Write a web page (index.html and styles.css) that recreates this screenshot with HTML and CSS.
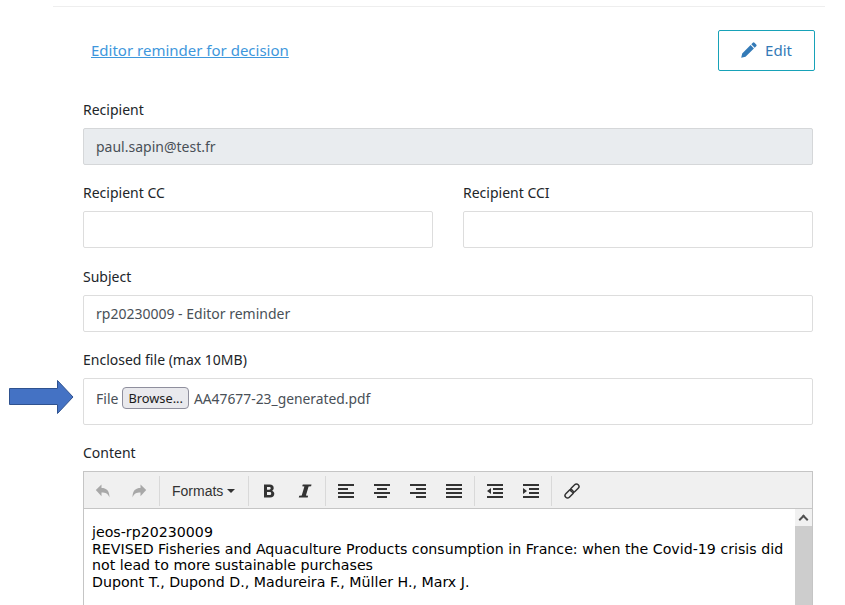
FILE: index.html
```html
<!DOCTYPE html>
<html lang="en">
<head>
    <meta charset="UTF-8">
    <title>Editor reminder</title>
    <link rel="stylesheet" href="styles.css">
</head>
<body>
    <div class="panel">
        <div class="panel-head">
            <a class="panel-title" href="#">Editor reminder for decision</a>
            <button class="btn-edit" type="button">
                <svg class="icon-pencil" viewBox="0 0 16 16" width="16" height="16"><path d="M11.800.8a1.200 1.200 0 0 1 1.700 0l1.700 1.700a1.200 1.200 0 0 1 0 1.700l-1.500 1.500-3.400-3.400zM9.600 3.100l3.300 3.300-8.400 8.400-4.300 1 1-4.300z" fill="#337ab7"/></svg>
                Edit
            </button>
        </div>

        <div class="form-group">
            <label>Recipient</label>
            <div class="field field-disabled">paul.sapin@test.fr</div>
        </div>

        <div class="form-row">
            <div class="form-group">
                <label>Recipient CC</label>
                <div class="field"></div>
            </div>
            <div class="form-group">
                <label>Recipient CCI</label>
                <div class="field"></div>
            </div>
        </div>

        <div class="form-group">
            <label>Subject</label>
            <div class="field">rp20230009 - Editor reminder</div>
        </div>

        <div class="form-group file-group">
            <label>Enclosed file (max 10MB)</label>
            <div class="field field-file">
                <span>File</span>
                <span class="browse">Browse...</span>
                <span class="file-name">AA47677-23_generated.pdf</span>
            </div>
            <svg class="arrow" viewBox="0 0 65 34" width="65" height="34"><path d="M.5 8.500h48V.5L64 17 48.500 33.500v-9H.5z" fill="#4472c4" stroke="#2f528f"/></svg>
        </div>

        <div class="form-group content-group">
            <label>Content</label>
            <div class="editor">
                <div class="toolbar">
                    <div class="tool-group">
                        <span class="tool muted"><svg viewBox="0 0 16 16" width="16" height="16"><path d="M6.500 1.500v3.600c4.700 0 8 2.400 8 9.400-1.300-3.700-3.800-5-8-5v3.700L.8 7z"/></svg></span>
                        <span class="tool muted"><svg viewBox="0 0 16 16" width="16" height="16"><path d="M9.500 1.500v3.600c-4.700 0-8 2.400-8 9.400 1.300-3.700 3.800-5 8-5v3.700L15.200 7z"/></svg></span>
                    </div>
                    <div class="tool-group">
                        <span class="tool tool-text">Formats <i class="caret"></i></span>
                    </div>
                    <div class="tool-group">
                        <span class="tool"><svg viewBox="0 0 16 16" width="16" height="16"><path fill-rule="evenodd" d="M3 1.500h5.800c2.500 0 3.900 1.300 3.900 3.400 0 1.300-.7 2.400-1.800 2.800 1.500.4 2.400 1.600 2.400 3.100 0 2.200-1.500 3.700-4.200 3.700H3zM6 3.900v2.800h2.200c1 0 1.500-.5 1.500-1.400 0-.9-.5-1.400-1.500-1.400zM6 9v3.100h2.500c1.100 0 1.700-.5 1.700-1.600S9.600 9 8.500 9z"/></svg></span>
                        <span class="tool"><svg viewBox="0 0 16 16" width="16" height="16"><path d="M5.800 1.500h8.700l-.4 1.800-2.500.3-2.700 8.800 2.200.3-.4 1.800H1.800l.4-1.800 2.500-.3 2.700-8.800-2.200-.3z"/></svg></span>
                    </div>
                    <div class="tool-group">
                        <span class="tool"><svg viewBox="0 0 16 16" width="16" height="16"><path d="M0 1h16v2H0zM0 5h10v2H0zM0 9h16v2H0zM0 13h16v2H0z"/></svg></span>
                        <span class="tool"><svg viewBox="0 0 16 16" width="16" height="16"><path d="M0 1h16v2H0zM3 5h10v2H3zM0 9h16v2H0zM3 13h10v2H3z"/></svg></span>
                        <span class="tool"><svg viewBox="0 0 16 16" width="16" height="16"><path d="M0 1h16v2H0zM6 5h10v2H6zM0 9h16v2H0zM6 13h10v2H6z"/></svg></span>
                        <span class="tool"><svg viewBox="0 0 16 16" width="16" height="16"><path d="M0 1h16v2H0zM0 5h16v2H0zM0 9h16v2H0zM0 13h16v2H0z"/></svg></span>
                    </div>
                    <div class="tool-group">
                        <span class="tool"><svg viewBox="0 0 16 16" width="16" height="16"><path d="M0 1h16v2H0zM6 5h10v2H6zM6 9h10v2H6zM0 13h16v2H0zM0 8l4-3v6z"/></svg></span>
                        <span class="tool"><svg viewBox="0 0 16 16" width="16" height="16"><path d="M0 1h16v2H0zM6 5h10v2H6zM6 9h10v2H6zM0 13h16v2H0zM4 8L0 5v6z"/></svg></span>
                    </div>
                    <div class="tool-group">
                        <span class="tool"><svg viewBox="0 0 16 16" width="16" height="16"><g fill="none" stroke="#333" stroke-width="1.500"><rect x="8.300" y=".4" width="5" height="9.600" rx="2.500" transform="rotate(45 10.800 5.200)"/><rect x="2.700" y="6" width="5" height="9.600" rx="2.500" transform="rotate(45 5.200 10.800)"/></g></svg></span>
                    </div>
                </div>
                <div class="editor-body">
                    <div class="editor-text">
                        <p>jeos-rp20230009</p>
                        <p>REVISED Fisheries and Aquaculture Products consumption in France: when the Covid-19 crisis did not lead to more sustainable purchases</p>
                        <p>Dupont T., Dupond D., Madureira F., Müller H., Marx J.</p>
                    </div>
                    <div class="scrollbar"><span class="scroll-up"></span></div>
                </div>
            </div>
        </div>
    </div>
</body>
</html>
```

FILE: styles.css
```css
html, body {
    height: 100%;
    overflow: hidden;
}

body {
    margin: 0;
    font-family: "Noto Sans", sans-serif;
    font-size: 14px;
    color: #212529;
    background: #fff;
}

.panel {
    width: 772px;
    margin-left: 53px;
    margin-top: 6px;
    border-top: 1px solid #eee;
    padding: 23px 12px 0 30px;
    box-sizing: border-box;
}

.panel-head {
    display: flex;
    justify-content: space-between;
    align-items: center;
    padding-left: 8px;
    margin-right: -2px;
    margin-bottom: 29px;
}

.panel-title {
    color: #3e97dc;
    font-size: 15px;
    padding-bottom: 2px;
}

.btn-edit {
    display: flex;
    align-items: center;
    justify-content: center;
    gap: 8px;
    width: 97px;
    height: 41px;
    padding: 0 0 2px;
    background: #fff;
    border: 1px solid #17a2b8;
    border-radius: 2px;
    color: #337ab7;
    font: 15px "Noto Sans", sans-serif;
}

.form-group {
    margin-bottom: 18.33px;
}

.content-group {
    margin-bottom: 0;
}

label {
    display: block;
    line-height: 19px;
    margin-bottom: 9px;
}

.field {
    height: 37px;
    line-height: 35px;
    box-sizing: border-box;
    border: 1px solid #ddd;
    border-radius: 2px;
    padding: 0 12px;
    color: #495057;
}

.field-disabled {
    background: #e9ecef;
    border-color: #d5d7d9;
}

.form-row {
    display: grid;
    grid-template-columns: 350px 350px;
    gap: 30px;
}

.file-group {
    position: relative;
}

.field-file {
    height: 46.67px;
    display: flex;
    align-items: flex-start;
    gap: 4px;
    padding-top: 8px;
    line-height: 24px;
}

.browse {
    height: 22px;
    line-height: 20px;
    box-sizing: border-box;
    padding: 0 5px;
    background: #e9e9ed;
    border: 1px solid #8f8f9d;
    border-radius: 4px;
    color: #1b1b1b;
    font-size: 12.8px;
}

.file-name {
    margin-left: 1px;
    font-size: 13.85px;
}

.arrow {
    position: absolute;
    left: -74px;
    top: 30px;
}

.editor {
    border: 1px solid #c5c5c5;
    border-bottom: 0;
}

.toolbar {
    display: flex;
    height: 37px;
    background: #f0f0f0;
    border-bottom: 1px solid #c5c5c5;
    padding-top: 4px;
    box-sizing: border-box;
}

.tool-group {
    display: flex;
    height: 30px;
    padding: 0 2px;
    border-right: 1px solid #d9d9d9;
}

.tool-group:first-child {
    padding-left: 1px;
}

.tool-group:last-child {
    border-right: 0;
}

.tool {
    display: flex;
    align-items: center;
    justify-content: center;
    width: 36px;
    height: 30px;
}

.tool svg {
    fill: #333;
}

.tool.muted svg {
    fill: #a8a8a8;
}

.tool-text {
    width: 84px;
    justify-content: flex-start;
    padding-left: 10px;
    box-sizing: border-box;
    font-family: "Liberation Sans", sans-serif;
    color: #333;
}

.caret {
    display: inline-block;
    margin-left: 4px;
    border: 4px solid transparent;
    border-top-color: #333;
    border-bottom: 0;
}

.editor-body {
    display: flex;
    height: 96px;
}

.editor-text {
    flex: 1;
    padding: 15px 8px 0;
    font-family: "DejaVu Sans", sans-serif;
    font-size: 14.2px;
    line-height: 16.67px;
    color: #000;
}

.editor-text p {
    margin: 0;
}

.scrollbar {
    width: 17px;
    background: #cdcdcd;
}

.scroll-up {
    display: block;
    height: 17px;
    background: #f1f1f1;
    position: relative;
}

.scroll-up::after {
    content: "";
    position: absolute;
    left: 5px;
    top: 7px;
    width: 7px;
    height: 7px;
    border-left: 2px solid #505050;
    border-top: 2px solid #505050;
    box-sizing: border-box;
    transform: rotate(45deg);
}
```
